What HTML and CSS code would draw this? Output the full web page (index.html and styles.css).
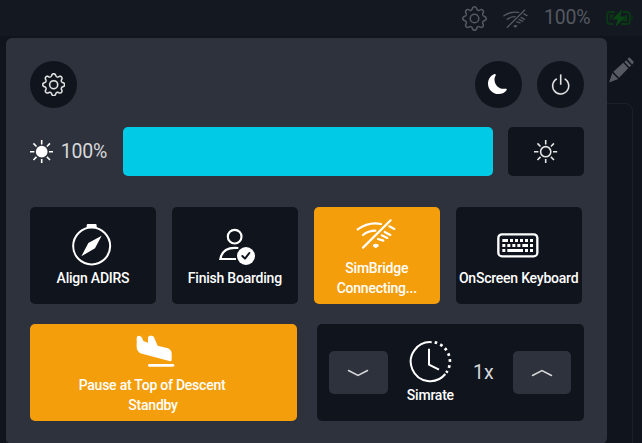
FILE: index.html
```html
<!DOCTYPE html>
<html lang="en">
<head>
<meta charset="utf-8">
<title>Quick Controls</title>
<link rel="stylesheet" href="styles.css">
</head>
<body>
<svg width="0" height="0" class="defs" aria-hidden="true">
  <symbol id="gear" viewBox="0 0 16 16">
    <path d="M8 4.754a3.246 3.246 0 1 0 0 6.492 3.246 3.246 0 0 0 0-6.492M5.754 8a2.246 2.246 0 1 1 4.492 0 2.246 2.246 0 0 1-4.492 0"/>
    <path d="M9.796 1.343c-.527-1.79-3.065-1.79-3.592 0l-.094.319a.873.873 0 0 1-1.255.52l-.292-.16c-1.64-.892-3.433.902-2.54 2.541l.159.292a.873.873 0 0 1-.52 1.255l-.319.094c-1.79.527-1.79 3.065 0 3.592l.319.094a.873.873 0 0 1 .52 1.255l-.16.292c-.892 1.64.901 3.434 2.541 2.54l.292-.159a.873.873 0 0 1 1.255.52l.094.319c.527 1.79 3.065 1.79 3.592 0l.094-.319a.873.873 0 0 1 1.255-.52l.292.16c1.64.893 3.434-.902 2.54-2.541l-.159-.292a.873.873 0 0 1 .52-1.255l.319-.094c1.79-.527 1.79-3.065 0-3.592l-.319-.094a.873.873 0 0 1-.52-1.255l.16-.292c.893-1.64-.902-3.433-2.541-2.54l-.292.159a.873.873 0 0 1-1.255-.52zm-2.633.283c.246-.835 1.428-.835 1.674 0l.094.319a1.873 1.873 0 0 0 2.693 1.115l.291-.16c.764-.415 1.6.42 1.184 1.185l-.159.292a1.873 1.873 0 0 0 1.116 2.692l.318.094c.835.246.835 1.428 0 1.674l-.319.094a1.873 1.873 0 0 0-1.115 2.693l.16.291c.415.764-.42 1.6-1.185 1.184l-.291-.159a1.873 1.873 0 0 0-2.693 1.116l-.094.318c-.246.835-1.428.835-1.674 0l-.094-.319a1.873 1.873 0 0 0-2.692-1.115l-.292.16c-.764.415-1.6-.42-1.184-1.185l.159-.291A1.873 1.873 0 0 0 1.945 8.93l-.319-.094c-.835-.246-.835-1.428 0-1.674l.319-.094A1.873 1.873 0 0 0 3.06 4.377l-.16-.292c-.415-.764.42-1.6 1.185-1.184l.292.159a1.873 1.873 0 0 0 2.692-1.115z"/>
  </symbol>
  <symbol id="wifi-off" viewBox="150 50 126 100">
    <g fill="none" stroke="currentColor" stroke-width="6.5" stroke-linecap="round">
      <path d="M158 87Q191 64 228 71M174 104Q190 91 211 91M253 78L268 86M239 95L256 104M230 105L247 113M219 116L235 121M174 142L257 60"/>
    </g>
    <path d="M204 133Q212 128 221 133V138L212 144L204 138Z" fill="currentColor"/>
  </symbol>
  <symbol id="rays" viewBox="0 0 16 16">
    <path d="M8 0v3M8 13v3M0 8h3M13 8h3M2.34 2.34l2.1 2.1M11.56 11.56l2.1 2.1M2.34 13.66l2.1-2.1M11.56 4.44l2.1-2.1" fill="none" stroke="currentColor" stroke-width="1.1"/>
  </symbol>
</svg>

<div class="screen">
  <header class="status">
    <svg class="status-gear"><use href="#gear"/></svg>
    <svg class="status-wifi"><use href="#wifi-off"/></svg>
    <span class="status-level">100%</span>
    <svg class="status-battery" viewBox="0 0 28 18">
      <path d="M9 3H4Q1.200 3 1.200 6V12Q1.200 15 4 15H7M17 3H21Q23.800 3 23.800 6V12Q23.800 15 21 15H15" fill="none" stroke="currentColor" stroke-width="1.900"/>
      <path d="M4 5.500H8.500L4 11.500ZM19.500 6H21.200V12.500H16ZM25.500 6Q28 9 25.500 12Z"/>
      <path d="M16.500 0L6 10.500H11.500L9.500 18L19.800 7.500H14.200Z" class="bolt"/>
    </svg>
  </header>
  <main class="page">
    <svg class="pencil" viewBox="0 0 25 26">
      <path d="M0 25.500L3.300 16L9.300 22ZM4.300 14.800L14.300 5.800L19.300 11.300L10 20.800ZM15.400 4.900L17.200 3.200L22.200 8.600L20.400 10.300ZM18.300 2.100L19.700.8Q20.500.2 21.200.9L24.400 4.500Q25 5.200 24.400 6L23.200 7.600Z"/>
    </svg>
    <div class="frame"></div>
  </main>

  <section class="panel">
    <div class="top-row">
      <button class="round"><svg class="i24 bold"><use href="#gear"/></svg></button>
      <div class="top-right">
        <button class="round"><svg class="moon" viewBox="0 0 16 16"><path d="M6 .278a.77.77 0 0 1 .08.858 7.200 7.200 0 0 0-.878 3.460c0 4.021 3.278 7.277 7.318 7.277q.792-.001 1.533-.16a.79.79 0 0 1 .81.316.73.73 0 0 1-.031.893A8.350 8.350 0 0 1 8.344 16C3.734 16 0 12.286 0 7.710 0 4.266 2.114 1.312 5.124.06A.75.75 0 0 1 6 .278"/></svg></button>
        <button class="round"><svg class="i24 bold" viewBox="0 0 16 16"><path d="M7.500 1v7h1V1z"/><path d="M3 8.812a5 5 0 0 1 2.578-4.375l-.485-.874A6 6 0 1 0 11 3.616l-.501.865A5 5 0 1 1 3 8.812"/></svg></button>
      </div>
    </div>

    <div class="brightness">
      <div class="level">
        <svg class="i24" viewBox="0 0 16 16"><use href="#rays"/><circle cx="8" cy="8" r="4"/></svg>
        <span>100%</span>
      </div>
      <div class="slider"></div>
      <button class="auto"><svg class="i24" viewBox="0 0 16 16"><use href="#rays"/><circle cx="8" cy="8" r="3.500" fill="none" stroke="currentColor" stroke-width="1.100"/></svg></button>
    </div>

    <div class="tiles">
      <button class="tile">
        <svg class="compass" viewBox="155 68 126 129">
          <circle cx="217" cy="137" r="55.500" fill="none" stroke="currentColor" stroke-width="6"/>
          <path d="M202 83V75Q202 71 206 71H228Q232 71 232 75V83ZM247 106L227 144L186 168L207 128Z"/>
        </svg>
        <span>Align ADIRS</span>
      </button>
      <button class="tile">
        <svg class="person" viewBox="158 83 114 114">
          <g fill="none" stroke="currentColor" stroke-width="6.500">
            <circle cx="208" cy="109" r="20.500"/>
            <path d="M219 143Q172 138 165 176H212"/>
          </g>
          <circle cx="242" cy="167" r="27"/>
          <path d="M231 167L239 175L252 158" fill="none" stroke="#0f141d" stroke-width="6" stroke-linecap="round" stroke-linejoin="round"/>
        </svg>
        <span>Finish Boarding</span>
      </button>
      <button class="tile active">
        <svg class="wifi"><use href="#wifi-off"/></svg>
        <span>SimBridge<br>Connecting...</span>
      </button>
      <button class="tile">
        <svg class="keyboard" viewBox="141 99 126 75">
          <rect x="145" y="103" width="117" height="66" rx="11" fill="none" stroke="currentColor" stroke-width="7"/>
          <path d="M157 117H174V126H157ZM180 117H189V126H180ZM195 117H204V126H195ZM210 117H219V126H210ZM225 117H234V126H225ZM240 117H249V126H240ZM157 132H166V141H157ZM172 132H181V141H172ZM187 132H196V141H187ZM202 132H211V141H202ZM217 132H234V141H217ZM240 132H249V141H240ZM157 147H166V156H157ZM172 147H219V156H172ZM225 147H234V156H225ZM240 147H249V156H240Z"/>
        </svg>
        <span>OnScreen Keyboard</span>
      </button>
    </div>

    <div class="wide-row">
      <button class="tile wide active">
        <svg class="plane" viewBox="345 60 120 99">
          <path d="M350 69Q350 62 357 62Q364 63 366 68L370 78L384 83V68Q384 62 391 62H396Q400 63 402 67L413 92L444 100Q455 105 455 116V135Q454 140 448 138L366 116Q352 112 350 98Z"/>
          <path d="M388 151H459" stroke="currentColor" stroke-width="8" stroke-linecap="round"/>
        </svg>
        <span class="pause">Pause at Top of Descent<br><span class="state">Standby</span></span>
      </button>
      <div class="simrate">
        <button class="step"><svg viewBox="0 0 24 12"><path d="M2.500 3.500L12 8.500L21.500 3.500"/></svg></button>
        <div class="clock-box">
          <svg class="clock" viewBox="297 73 129 129">
            <path d="M365 79.500A58.500 58.500 0 1 0 406 175M357 99V147L387 162"/>
            <path class="dots" d="M374 80A58.500 58.500 0 0 1 409 171"/>
          </svg>
          <span>Simrate</span>
        </div>
        <span class="rate">1x</span>
        <button class="step"><svg viewBox="0 0 24 12"><path d="M2.500 8.500L12 3.500L21.500 8.500"/></svg></button>
      </div>
    </div>
  </section>
</div>
</body>
</html>
```

FILE: styles.css
```css
* { box-sizing: border-box; }
body { margin: 0; font-family: Roboto, "Liberation Sans", sans-serif; color: #fff; }
button { border: 0; padding: 0; font: inherit; color: inherit; }
svg { display: block; fill: currentColor; flex: none; }
.defs { position: absolute; }

.screen {
  position: relative;
  width: 642px;
  height: 443px;
  overflow: hidden;
  background: #0f141d;
}

.status {
  display: flex;
  align-items: center;
  height: 36px;
  padding-left: 462px;
  background: #131821;
  color: #555960;
}
.status-gear { width: 25px; height: 25px; }
.status-wifi { width: 27px; height: 21px; margin-left: 15px; }
.status-level { width: 47px; margin-left: 15px; font-size: 19.500px; line-height: 24px; letter-spacing: -.2px; }
.status-battery { width: 28px; height: 18px; margin-left: 15px; color: #0a3714; }
.bolt { fill: #0b4515; }

.page { display: flex; flex-direction: column; padding-top: 21px; }
.pencil { width: 25px; height: 26px; margin-left: 608.500px; color: #575a60; }
.frame {
  width: 627px;
  height: 400px;
  margin: 20px 0 0 6px;
  border: 1px solid #1b202a;
  border-radius: 8px;
}

.panel {
  position: absolute;
  left: 6.400px;
  top: 37.600px;
  width: 601px;
  height: 406px;
  padding: 23.500px 23.500px 0;
  border-radius: 6px;
  background: #2e323c;
}

.top-row, .top-right, .brightness, .level, .tiles, .wide-row, .simrate { display: flex; align-items: center; }
.top-row { justify-content: space-between; }
.top-right { gap: 15.500px; }
.round {
  display: flex;
  align-items: center;
  justify-content: center;
  width: 46.800px;
  height: 46.800px;
  border-radius: 50%;
  background: #0f141d;
  color: #e4e4e5;
}
.i24 { width: 23.400px; height: 23.400px; }
.bold { stroke: currentColor; stroke-width: .1px; }
.moon { width: 20px; height: 20px; color: #fff; }

.brightness { margin-top: 19.500px; }
.level { width: 93.300px; gap: 7.500px; color: #d7d8da; font-size: 19.500px; letter-spacing: -.2px; }
.level svg { color: #fff; }
.slider { width: 369.500px; height: 48.700px; border-radius: 5px; background: #00cae6; }
.auto {
  display: flex;
  align-items: center;
  justify-content: center;
  width: 76px;
  height: 48.700px;
  margin-left: 15.200px;
  border-radius: 5px;
  background: #0f141d;
  color: #e4e4e5;
}

.tiles { gap: 15.700px; margin-top: 31px; }
.tile {
  display: flex;
  flex-direction: column;
  align-items: center;
  flex: none;
  width: 126.200px;
  height: 97.400px;
  border-radius: 5px;
  background: #0f141d;
  font-size: 14px;
  font-weight: 500;
  letter-spacing: -.23px;
  line-height: 19.500px;
  text-align: center;
  white-space: nowrap;
}
.active { background: #f59e0b; }
.tile > span { margin-top: auto; padding-bottom: 15.500px; }
.tile.active > span { padding-bottom: 6px; }
.compass { width: 42px; height: 43px; margin: 15.500px 0 0 -2px; }
.person { width: 38px; height: 38px; margin: 20.500px 0 0 4px; }
.wifi { width: 42px; height: 33.300px; margin: 9.500px 0 0 -1px; }
.keyboard { width: 42px; height: 25px; margin: 25.700px 0 0 -1px; }

.wide-row { justify-content: space-between; margin-top: 19.500px; }
.tile.wide { width: 267.300px; }
.plane { width: 40px; height: 33px; margin: 11px 0 0 -18px; }
.pause { margin-left: -23px; }
.state { padding-left: 2px; }

.simrate {
  width: 267.300px;
  height: 97.400px;
  padding: 0 12.500px;
  border-radius: 5px;
  background: #0f141d;
}
.step {
  display: flex;
  align-items: center;
  justify-content: center;
  flex: none;
  width: 58.500px;
  height: 43px;
  border-radius: 5px;
  background: #2e323c;
}
.step svg { width: 24px; height: 12px; fill: none; stroke: #d8d9db; stroke-width: 1.500; stroke-linecap: round; }
.clock-box {
  display: flex;
  flex-direction: column;
  align-items: center;
  width: 48px;
  margin-left: 19px;
  font-size: 14px;
  font-weight: 500;
  letter-spacing: -.23px;
  line-height: 19.500px;
}
.clock { width: 43px; height: 43px; margin-bottom: 3px; fill: none; stroke: currentColor; stroke-width: 6px; }
.dots { stroke-width: 8px; stroke-dasharray: 8px 10px; }
.rate { width: 21px; margin: 0 19px 0 19px; font-size: 19.500px; color: #d7d8da; }
```
